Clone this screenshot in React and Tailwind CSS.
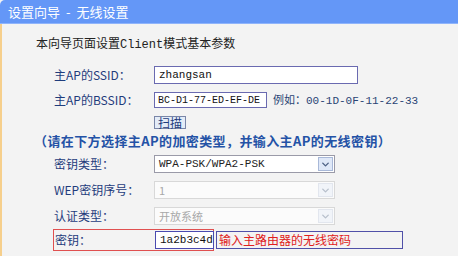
import { ChevronDown } from 'lucide-react'

const cjk = "font-['Noto_Sans_CJK_SC','Noto_Sans',sans-serif]"
const mono = "font-['Liberation_Mono','Noto_Sans_CJK_SC',monospace]"

function Label({ children }) {
  return (
    <span className={`w-[100px] shrink-0 whitespace-nowrap text-[12px] text-[#1f3c7c] ${cjk}`}>{children}</span>
  )
}

function Select({ value, disabled }) {
  return (
    <div
      className={`flex h-[18px] w-[181px] items-center border ${
        disabled ? 'border-[#d8d8d8] bg-[#fbfbfb]' : 'border-[#9a9aa8] bg-white'
      }`}
    >
      <span
        className={`flex-1 pl-[4px] text-[11px] leading-none ${disabled ? `text-[#a8a8a8] ${cjk}` : `text-[#222] ${mono}`}`}
      >
        {value}
      </span>
      <span
        className={`mr-[1px] flex h-[14px] w-[15px] items-center justify-center border ${
          disabled ? 'border-[#e2e6ee] bg-[#f1f4f9] text-[#b8c0cc]' : 'border-[#a8b8d8] bg-[#dfe8f8] text-[#4d6185]'
        }`}
      >
        <ChevronDown size={11} strokeWidth={3} />
      </span>
    </div>
  )
}

export default function App() {
  return (
    <div className={`flex h-[256px] w-[458px] flex-col overflow-hidden bg-[#f3f3f3] ${cjk}`}>
      {/* title bar */}
      <div className="flex h-[24px] shrink-0 items-center rounded-tl-[5px] border-b border-[#8fb4fb] bg-[#6497f7] pl-[8px]">
        <span className="whitespace-nowrap text-[13px] text-white">
          设置向导<span className="mx-[6px]">-</span>无线设置
        </span>
      </div>

      <div className="flex flex-1 flex-col border-l-2 border-[#f6cf8c] pl-[34px] pt-[8px]">
        <div className="h-[22px] text-[12px] leading-[22px] text-[#222]">
          本向导页面设置<span className={mono}>Client</span>模式基本参数
        </div>

        <div className="mt-[12px] flex flex-col gap-[8px] pl-[18px]">
          <div className="flex h-[18px] items-center">
            <Label>主AP的SSID：</Label>
            <div className={`flex h-[18px] w-[204px] items-center border border-[#6a6ab0] bg-white pl-[4px] text-[11px] text-[#111] ${mono}`}>
              zhangsan
            </div>
          </div>

          <div className="flex h-[16px] items-center">
            <Label>主AP的BSSID：</Label>
            <div className={`flex h-[16px] w-[113px] items-center overflow-hidden whitespace-nowrap border border-[#6a6ab0] bg-white pl-[3px] text-[10px] text-[#111] ${mono}`}>
              BC-D1-77-ED-EF-DE
            </div>
            <span className="ml-[6px] whitespace-nowrap text-[11px] text-[#2a4474]">
              例如：<span className={mono}>00-1D-0F-11-22-33</span>
            </span>
          </div>

          <div className="flex h-[13px] items-center pl-[100px]">
            <span className="flex h-[13px] items-center border border-[#7a86a8] bg-[#e4ecf8] px-[3px] text-[12px] leading-none text-[#1f3c7c]">
              扫描
            </span>
          </div>
        </div>

        <div className="-ml-[2px] mt-[3px] h-[18px] whitespace-nowrap text-[13px] font-semibold leading-[18px] tracking-[0.4px] text-[#2452a6]">
          （请在下方选择主AP的加密类型，并输入主AP的无线密钥）
        </div>

        <div className="mt-[5px] flex flex-col gap-[8px] pl-[18px]">
          <div className="flex h-[18px] items-center">
            <Label>密钥类型：</Label>
            <Select value="WPA-PSK/WPA2-PSK" />
          </div>
          <div className="flex h-[18px] items-center">
            <Label>WEP密钥序号：</Label>
            <Select value="1" disabled />
          </div>
          <div className="flex h-[18px] items-center">
            <Label>认证类型：</Label>
            <Select value="开放系统" disabled />
          </div>
        </div>

        <div className="ml-[17px] mt-[4px] flex items-center">
          <div className="flex h-[22px] w-[161px] items-center border border-[#e05050] pl-[1px]">
            <Label>密钥：</Label>
            <div className={`flex h-[18px] w-[61px] items-center border border-[#4a4ab0] bg-white pl-[4px] text-[11px] text-[#111] ${mono}`}>
              1a2b3c4d
            </div>
          </div>
          <div className="ml-[2px] flex h-[18px] w-[187px] items-center border border-[#5050a8] pl-[2px] text-[12px] text-[#e02020]">
            输入主路由器的无线密码
          </div>
        </div>
      </div>
    </div>
  )
}
